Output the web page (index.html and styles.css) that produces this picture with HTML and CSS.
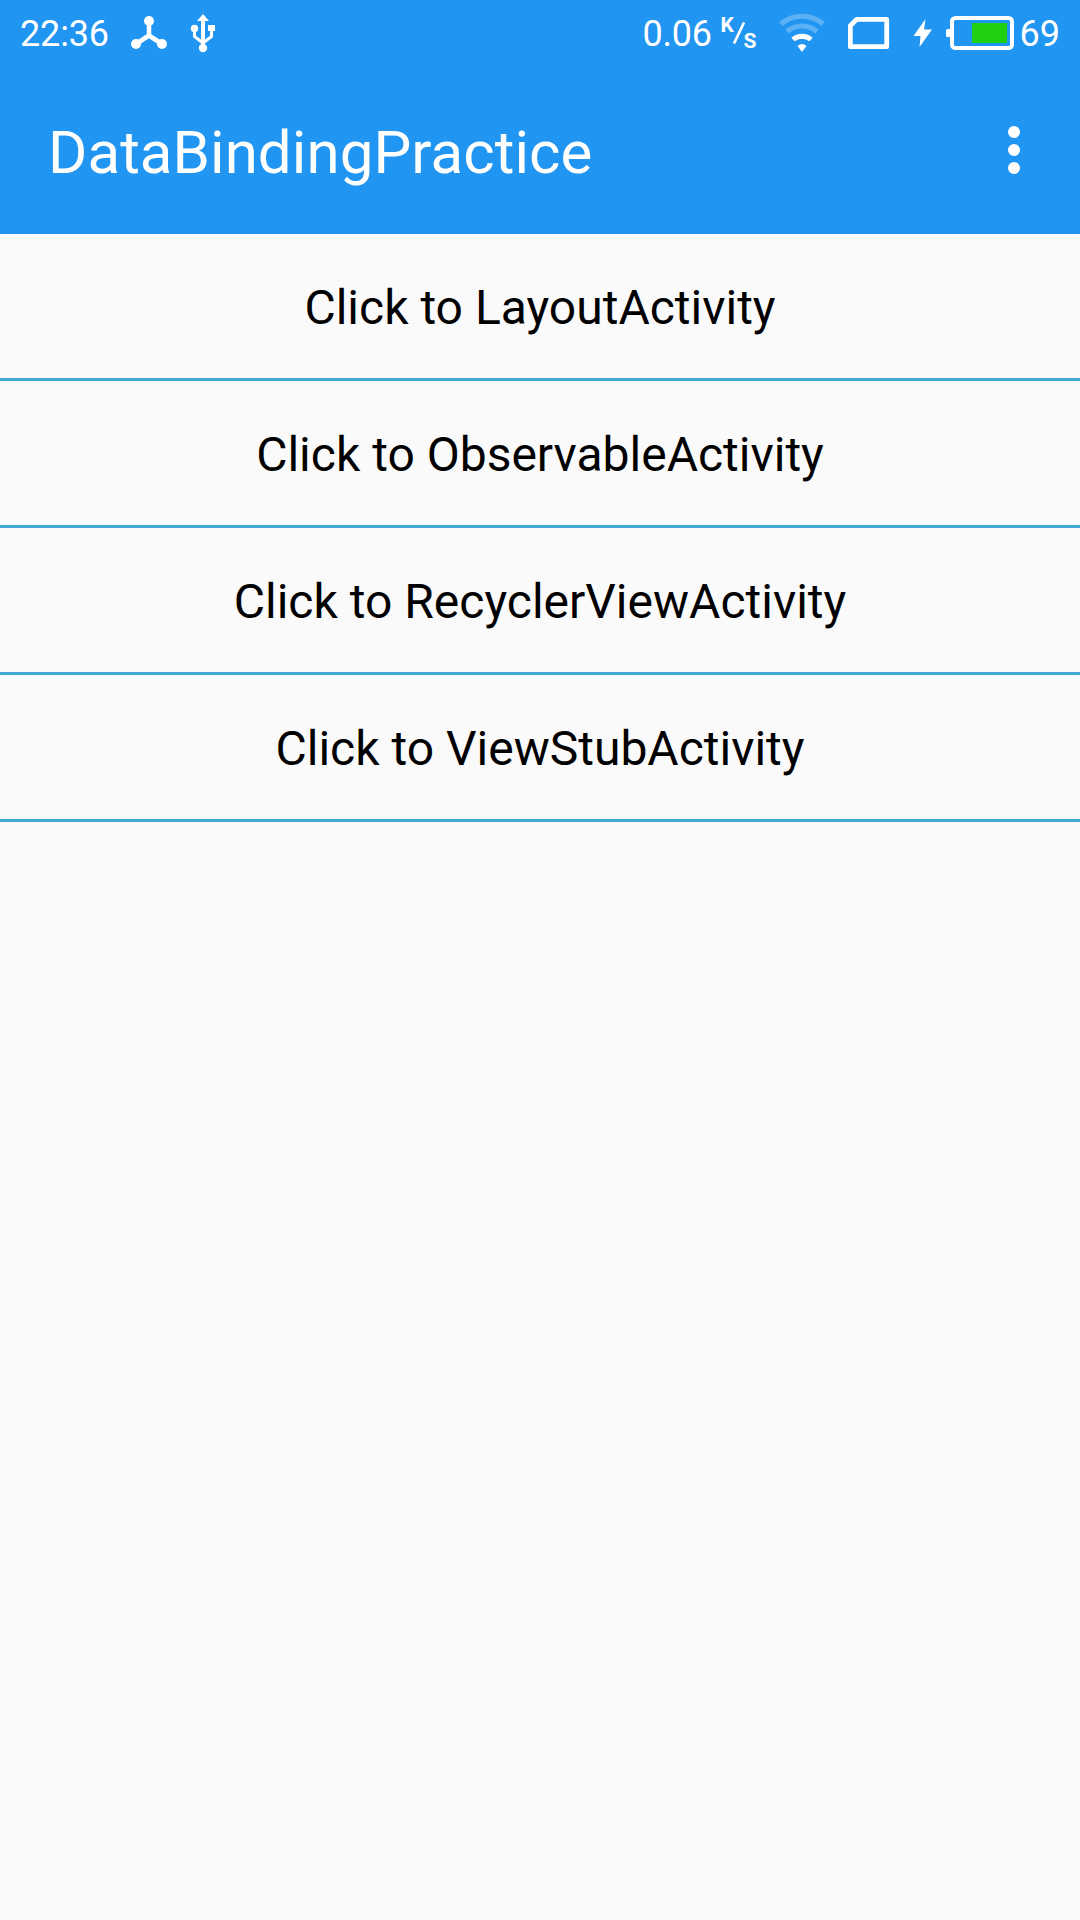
FILE: index.html
```html
<!DOCTYPE html>
<html lang="en">
<head>
<meta charset="utf-8">
<title>DataBindingPractice</title>
<link rel="stylesheet" href="styles.css">
</head>
<body>
<header class="header">
  <div class="status">
    <div class="status-group">
      <span class="clock">22:36</span>
      <svg class="icon-hub" width="38" height="36" viewBox="130 15 38 36">
        <path d="M149 21V35.500L136 44M149 35.500L162 44" fill="none" stroke="#fff" stroke-width="4.500"/>
        <g fill="#fff"><circle cx="149" cy="21" r="5"/><circle cx="136" cy="44" r="5"/><circle cx="162" cy="44" r="5"/></g>
      </svg>
      <svg class="icon-usb" width="26" height="40" viewBox="190 13 26 40">
        <g fill="none" stroke="#fff" stroke-width="3"><path d="M203 18V48" stroke-width="4"/><path d="M194.500 28V36.500L203 43M211.500 28V36.500L203 43"/></g>
        <path d="M203 14L209 21H197ZM208 25H215V31H208Z" fill="#fff"/>
        <circle cx="194.500" cy="28.500" r="3.700" fill="#fff"/><circle cx="203" cy="48" r="4.200" fill="#fff"/>
      </svg>
    </div>
    <div class="status-group">
      <span class="speed">0.06</span>
      <span class="unit"><span class="unit-k">K</span><svg class="unit-slash" width="14" height="24" viewBox="0 0 14 24"><path d="M2 22.500L12 1.500" stroke="#fff" stroke-width="2.700"/></svg><span class="unit-s">S</span></span>
      <svg class="icon-wifi" width="46" height="40" viewBox="779 13 46 40">
        <g fill="none" stroke="#fff" stroke-width="5"><path d="M781 24C793 13.500 811 13.500 823 24" opacity=".27"/><path d="M787 31.500C796 24 808 24 817 31.500" opacity=".27"/><path d="M793 39.500C798 35 806 35 811 39.500"/></g>
        <path d="M797.500 46Q802 42 806.500 46L802 52Z" fill="#fff"/>
      </svg>
      <svg class="icon-sim" width="42" height="34" viewBox="848 16 42 34">
        <path d="M856.700 19.300H886.700V46.700H850.300V25.700Z" fill="none" stroke="#fff" stroke-width="4.800" stroke-linejoin="round"/>
      </svg>
      <svg class="icon-bolt" width="20" height="30" viewBox="912 18 20 30">
        <path d="M925.500 19L913.500 36H920.500L919.500 47L932 29.500H924Z" fill="#fff"/>
      </svg>
      <svg class="icon-battery" width="70" height="36" viewBox="945 15 70 36">
        <rect x="952" y="18" width="60" height="30" rx="3.500" fill="none" stroke="#fff" stroke-width="4"/>
        <rect x="946" y="29" width="5" height="8" rx="1.500" fill="#fff"/>
        <rect x="972" y="23" width="35" height="20" fill="#20d113"/>
      </svg>
      <span class="percent">69</span>
    </div>
  </div>
  <div class="toolbar">
    <h1 class="title">DataBindingPractice</h1>
    <div class="menu"><i class="dot"></i><i class="dot"></i><i class="dot"></i></div>
  </div>
</header>
<main class="list">
  <div class="row">Click to LayoutActivity</div>
  <div class="row">Click to ObservableActivity</div>
  <div class="row">Click to RecyclerViewActivity</div>
  <div class="row">Click to ViewStubActivity</div>
</main>
</body>
</html>
```
FILE: styles.css
```css
* { box-sizing: border-box; }
body {
  margin: 0;
  min-height: 1920px;
  background: #fafafa;
  color: #000;
  font-family: Roboto, "Liberation Sans", sans-serif;
}
.header { height: 234px; background: #2095f2; color: #fff; }
.status {
  height: 66px;
  padding: 0 20px 0 20px;
  display: flex;
  justify-content: space-between;
  font-size: 36px;
  line-height: 66px;
}
.status-group { display: flex; align-items: center; }
.clock, .speed, .percent { padding-top: 2px; line-height: 64px; }
.clock { letter-spacing: -0.15px; }
.icon-hub { margin-left: 21px; }
.icon-usb { margin-left: 22px; }
.speed { letter-spacing: -0.3px; }
.unit { display: flex; align-items: center; margin-left: 9px; height: 38px; font-size: 21px; line-height: 22px; font-weight: 700; }
.unit-k { align-self: flex-start; width: 11px; }
.unit-slash { margin: 0 -2px 0 0; }
.unit-s { align-self: flex-end; }
.icon-wifi { margin-left: 22px; }
.icon-sim { margin-left: 23px; }
.icon-bolt { margin-left: 22px; }
.icon-battery { margin-left: 13px; margin-right: 5px; }
.toolbar {
  height: 168px;
  padding: 0 60px 0 48px;
  display: flex;
  align-items: flex-start;
  justify-content: space-between;
}
.title { margin: 52px 0 0; font-size: 60px; line-height: 70px; font-weight: 400; letter-spacing: 0.07px; }
.menu { display: flex; flex-direction: column; gap: 6px; margin-top: 60px; }
.dot { width: 12px; height: 12px; border-radius: 50%; background: #fff; }
.row {
  height: 147px;
  border-bottom: 3px solid #41abd5;
  font-size: 48px;
  line-height: 148px;
  text-align: center;
}
```
